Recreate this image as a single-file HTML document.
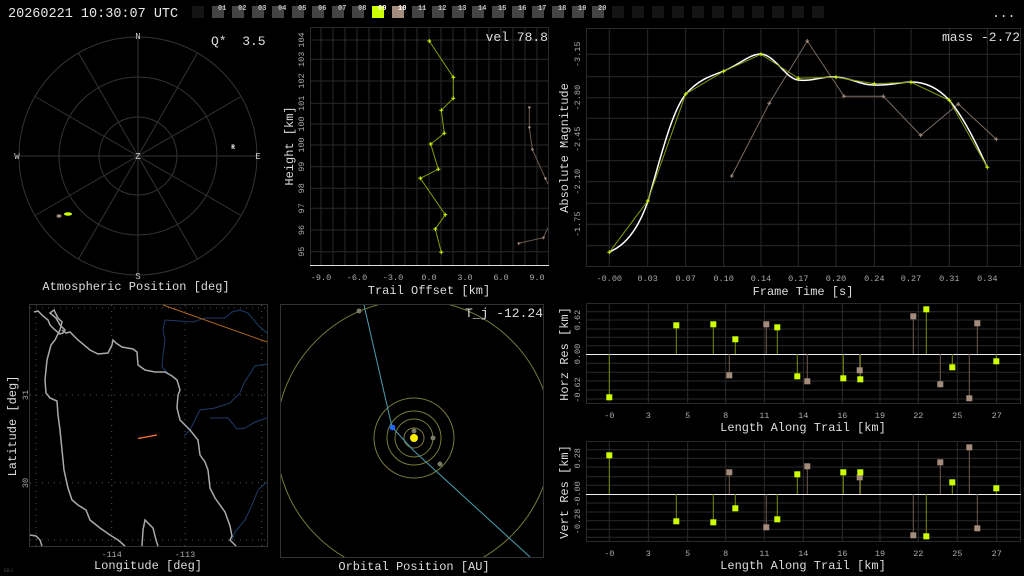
<!DOCTYPE html>
<html><head><meta charset="utf-8"><style>
html,body{margin:0;padding:0;background:#000;width:1024px;height:576px;overflow:hidden}
svg{display:block}
text{font-family:"Liberation Mono",monospace}
</style></head><body>
<svg width="1024" height="576" viewBox="0 0 1024 576" xmlns="http://www.w3.org/2000/svg">
<rect width="1024" height="576" fill="#000"/>
<!-- top bar -->
<text x="8" y="17" font-size="13.5" fill="#e8e8e8">20260221 10:30:07 UTC</text>
<g>
<rect x="192" y="6" width="12" height="12" fill="#141414"/>
<rect x="212" y="6" width="12" height="12" fill="#444"/><rect x="232" y="6" width="12" height="12" fill="#444"/>
<rect x="252" y="6" width="12" height="12" fill="#444"/><rect x="272" y="6" width="12" height="12" fill="#444"/>
<rect x="292" y="6" width="12" height="12" fill="#444"/><rect x="312" y="6" width="12" height="12" fill="#444"/>
<rect x="332" y="6" width="12" height="12" fill="#444"/><rect x="352" y="6" width="12" height="12" fill="#444"/>
<rect x="372" y="6" width="12" height="12" fill="#ccff00"/><rect x="392" y="6" width="12" height="12" fill="#a48c7c"/>
<rect x="412" y="6" width="12" height="12" fill="#444"/><rect x="432" y="6" width="12" height="12" fill="#444"/>
<rect x="452" y="6" width="12" height="12" fill="#444"/><rect x="472" y="6" width="12" height="12" fill="#444"/>
<rect x="492" y="6" width="12" height="12" fill="#444"/><rect x="512" y="6" width="12" height="12" fill="#444"/>
<rect x="532" y="6" width="12" height="12" fill="#444"/><rect x="552" y="6" width="12" height="12" fill="#444"/>
<rect x="572" y="6" width="12" height="12" fill="#444"/><rect x="592" y="6" width="12" height="12" fill="#444"/>
<rect x="612" y="6" width="12" height="12" fill="#141414"/><rect x="632" y="6" width="12" height="12" fill="#141414"/>
<rect x="652" y="6" width="12" height="12" fill="#141414"/><rect x="672" y="6" width="12" height="12" fill="#141414"/>
<rect x="692" y="6" width="12" height="12" fill="#141414"/><rect x="712" y="6" width="12" height="12" fill="#141414"/>
<rect x="732" y="6" width="12" height="12" fill="#141414"/><rect x="752" y="6" width="12" height="12" fill="#141414"/>
<rect x="772" y="6" width="12" height="12" fill="#141414"/><rect x="792" y="6" width="12" height="12" fill="#141414"/>
<rect x="812" y="6" width="12" height="12" fill="#141414"/>
</g>
<g font-size="7" fill="#bbb" font-weight="bold">
<text x="218" y="10">01</text><text x="238" y="10">02</text><text x="258" y="10">03</text><text x="278" y="10">04</text><text x="298" y="10">05</text><text x="318" y="10">06</text><text x="338" y="10">07</text><text x="358" y="10">08</text><text x="378" y="10" fill="#fff">09</text><text x="398" y="10" fill="#fff">10</text><text x="418" y="10">11</text><text x="438" y="10">12</text><text x="458" y="10">13</text><text x="478" y="10">14</text><text x="498" y="10">15</text><text x="518" y="10">16</text><text x="538" y="10">17</text><text x="558" y="10">18</text><text x="578" y="10">19</text><text x="598" y="10">20</text>
</g>
<text x="992" y="17" font-size="13" fill="#ddd">...</text>

<!-- sky plot -->
<g stroke="#333" stroke-width="1" fill="none">
<circle cx="138" cy="156" r="39"/><circle cx="138" cy="156" r="79"/><circle cx="138" cy="156" r="119"/>
<line x1="138" y1="37" x2="138" y2="275"/><line x1="19" y1="156" x2="257" y2="156"/>
<line x1="197.5" y1="52.9" x2="78.5" y2="259.1"/><line x1="241.1" y1="96.5" x2="34.9" y2="215.5"/>
<line x1="78.5" y1="52.9" x2="197.5" y2="259.1"/><line x1="34.9" y1="96.5" x2="241.1" y2="215.5"/>
</g>
<g font-size="9" fill="#ccc" text-anchor="middle">
<text x="138" y="39">N</text><text x="138" y="279">S</text><text x="17" y="159">W</text><text x="258" y="159">E</text><text x="138" y="159">Z</text>
</g>
<text x="233" y="149" font-size="6" fill="#fff" font-weight="bold" text-anchor="middle">R</text>
<ellipse cx="68" cy="214" rx="4" ry="1.8" fill="#ccff00"/>
<ellipse cx="59" cy="216" rx="2.5" ry="1.8" fill="#a48c7c"/>
<text x="211" y="45" font-size="13" fill="#ddd">Q*&#160;&#160;3.5</text>
<text x="136" y="290" font-size="12" fill="#ddd" text-anchor="middle">Atmospheric Position [deg]</text>

<!-- trail offset -->
<g stroke="#2a2a2a" stroke-width="1">
<line x1="321" y1="27" x2="321" y2="265"/><line x1="333" y1="27" x2="333" y2="265"/><line x1="345" y1="27" x2="345" y2="265"/><line x1="357" y1="27" x2="357" y2="265"/><line x1="369" y1="27" x2="369" y2="265"/><line x1="381" y1="27" x2="381" y2="265"/><line x1="393" y1="27" x2="393" y2="265"/><line x1="405" y1="27" x2="405" y2="265"/><line x1="417" y1="27" x2="417" y2="265"/><line x1="429" y1="27" x2="429" y2="265"/><line x1="441" y1="27" x2="441" y2="265"/><line x1="453" y1="27" x2="453" y2="265"/><line x1="465" y1="27" x2="465" y2="265"/><line x1="477" y1="27" x2="477" y2="265"/><line x1="489" y1="27" x2="489" y2="265"/><line x1="501" y1="27" x2="501" y2="265"/><line x1="513" y1="27" x2="513" y2="265"/><line x1="525" y1="27" x2="525" y2="265"/><line x1="537" y1="27" x2="537" y2="265"/>
<line x1="310" y1="40" x2="548" y2="40"/><line x1="310" y1="59.3" x2="548" y2="59.3"/><line x1="310" y1="81" x2="548" y2="81"/><line x1="310" y1="103.3" x2="548" y2="103.3"/><line x1="310" y1="124" x2="548" y2="124"/><line x1="310" y1="145" x2="548" y2="145"/><line x1="310" y1="166.7" x2="548" y2="166.7"/><line x1="310" y1="188.3" x2="548" y2="188.3"/><line x1="310" y1="208.3" x2="548" y2="208.3"/><line x1="310" y1="230" x2="548" y2="230"/><line x1="310" y1="251.7" x2="548" y2="251.7"/>
</g>
<rect x="310.5" y="27.5" width="238" height="238" fill="none" stroke="#2a2a2a"/>
<line x1="310" y1="265.5" x2="549" y2="265.5" stroke="#ddd"/>
<polyline fill="none" stroke="#8a9a00" stroke-width="1" points="429.3,41 453.3,77.3 453.3,98.3 441.3,110.3 444.3,133.3 430.7,144 438.3,169.3 420.3,178.3 445.3,214.7 435.3,229 441.3,252.3"/>
<g stroke="#ccff00" stroke-width="1"><path d="M427.3,41h4M429.3,39v4M451.3,77.3h4M453.3,75.3v4M451.3,98.3h4M453.3,96.3v4M439.3,110.3h4M441.3,108.3v4M442.3,133.3h4M444.3,131.3v4M428.7,144h4M430.7,142v4M436.3,169.3h4M438.3,167.3v4M418.3,178.3h4M420.3,176.3v4M443.3,214.7h4M445.3,212.7v4M433.3,229h4M435.3,227v4M439.3,252.3h4M441.3,250.3v4"/></g>
<polyline fill="none" stroke="#6a5a50" points="529.3,107.3 529.3,127.3 532.3,149.3 545.3,178.3 548,184"/>
<polyline fill="none" stroke="#6a5a50" points="548,227.7 543.3,237.7 518.7,243.3"/>
<g stroke="#a48c7c"><path d="M528,107.3h3M529.3,106v3M528,127.3h3M529.3,126v3M531,149.3h3M532.3,148v3M544,178.3h3M545.3,177v3M542,237.7h3M543.3,236.4v3M517.4,243.3h3M518.7,242v3"/></g>
<text x="548" y="41" font-size="13" fill="#ddd" text-anchor="end">vel 78.8</text>
<g font-size="8.5" fill="#aaa" text-anchor="middle">
<text x="321" y="280">-9.0</text><text x="357" y="280">-6.0</text><text x="393" y="280">-3.0</text><text x="429" y="280">0.0</text><text x="465" y="280">3.0</text><text x="501" y="280">6.0</text><text x="537" y="280">9.0</text>
</g>
<g font-size="8.5" fill="#aaa" text-anchor="middle">
<text transform="translate(304,40) rotate(-90)">104</text><text transform="translate(304,59.3) rotate(-90)">103</text><text transform="translate(304,81) rotate(-90)">102</text><text transform="translate(304,103.3) rotate(-90)">101</text><text transform="translate(304,124) rotate(-90)">100</text><text transform="translate(304,145) rotate(-90)">100</text><text transform="translate(304,166.7) rotate(-90)">99</text><text transform="translate(304,188.3) rotate(-90)">98</text><text transform="translate(304,208.3) rotate(-90)">97</text><text transform="translate(304,230) rotate(-90)">96</text><text transform="translate(304,251.7) rotate(-90)">95</text>
</g>
<text transform="translate(293,146) rotate(-90)" font-size="12" fill="#ddd" text-anchor="middle">Height [km]</text>
<text x="429" y="294" font-size="12" fill="#ddd" text-anchor="middle">Trail Offset [km]</text>

<!-- magnitude -->
<g stroke="#2a2a2a">
<line x1="609.3" y1="28" x2="609.3" y2="266"/><line x1="647.7" y1="28" x2="647.7" y2="266"/><line x1="685.7" y1="28" x2="685.7" y2="266"/><line x1="723.7" y1="28" x2="723.7" y2="266"/><line x1="761" y1="28" x2="761" y2="266"/><line x1="798.3" y1="28" x2="798.3" y2="266"/><line x1="836" y1="28" x2="836" y2="266"/><line x1="874.3" y1="28" x2="874.3" y2="266"/><line x1="911" y1="28" x2="911" y2="266"/><line x1="949.3" y1="28" x2="949.3" y2="266"/><line x1="987.3" y1="28" x2="987.3" y2="266"/>
<line x1="586" y1="54.3" x2="1020" y2="54.3"/><line x1="586" y1="76.7" x2="1020" y2="76.7"/><line x1="586" y1="97.7" x2="1020" y2="97.7"/><line x1="586" y1="118.3" x2="1020" y2="118.3"/><line x1="586" y1="139.3" x2="1020" y2="139.3"/><line x1="586" y1="160.7" x2="1020" y2="160.7"/><line x1="586" y1="181.7" x2="1020" y2="181.7"/><line x1="586" y1="203.3" x2="1020" y2="203.3"/><line x1="586" y1="224.3" x2="1020" y2="224.3"/><line x1="586" y1="245.7" x2="1020" y2="245.7"/>
</g>
<rect x="586.5" y="28.5" width="434" height="238" fill="none" stroke="#2a2a2a"/>
<polyline fill="none" stroke="#7a6a60" points="731.7,176 769.3,103.3 807.3,41 844,96.3 883.3,96.3 920.7,135.3 958.3,104 996.3,139.3"/>
<g stroke="#a48c7c"><path d="M729.7,176h4M731.7,174v4M767.3,103.3h4M769.3,101.3v4M805.3,41h4M807.3,39v4M842,96.3h4M844,94.3v4M881.3,96.3h4M883.3,94.3v4M918.7,135.3h4M920.7,133.3v4M956.3,104h4M958.3,102v4M994.3,139.3h4M996.3,137.3v4"/></g>
<path d="M609,252 C625,246 638,230 648,201 C660,160 672,110 686,94 C698,80 710,76 724,71 C740,64 750,54 761,54 C775,55 785,78 798,80 C812,82 822,76 836,77 C852,78 860,85 874,85 C890,86 900,82 911,82 C928,82 940,90 949,100 C962,115 975,140 987,167" fill="none" stroke="#fff" stroke-width="1.5"/>
<polyline fill="none" stroke="#8a9a00" points="609.3,252.3 647.7,201 685.7,94 723.7,71.3 761,54.3 798.3,78.3 836,77.3 874.3,83.7 911,82.3 949.3,100.3 987.3,167.3"/>
<g stroke="#ccff00"><path d="M607.3,252.3h4M609.3,250.3v4M645.7,201h4M647.7,199v4M683.7,94h4M685.7,92v4M721.7,71.3h4M723.7,69.3v4M759,54.3h4M761,52.3v4M796.3,78.3h4M798.3,76.3v4M834,77.3h4M836,75.3v4M872.3,83.7h4M874.3,81.7v4M909,82.3h4M911,80.3v4M947.3,100.3h4M949.3,98.3v4M985.3,167.3h4M987.3,165.3v4"/></g>
<text x="1020" y="41" font-size="13" fill="#ddd" text-anchor="end">mass -2.72</text>
<g font-size="8.5" fill="#aaa" text-anchor="middle">
<text x="609.3" y="281">-0.00</text><text x="647.7" y="281">0.03</text><text x="685.7" y="281">0.07</text><text x="723.7" y="281">0.10</text><text x="761" y="281">0.14</text><text x="798.3" y="281">0.17</text><text x="836" y="281">0.20</text><text x="874.3" y="281">0.24</text><text x="911" y="281">0.27</text><text x="949.3" y="281">0.31</text><text x="987.3" y="281">0.34</text>
<text transform="translate(580,54.3) rotate(-90)">-3.15</text><text transform="translate(580,97.7) rotate(-90)">-2.80</text><text transform="translate(580,139.3) rotate(-90)">-2.45</text><text transform="translate(580,181.7) rotate(-90)">-2.10</text><text transform="translate(580,224.3) rotate(-90)">-1.75</text>
</g>
<text transform="translate(568,148) rotate(-90)" font-size="12" fill="#ddd" text-anchor="middle">Absolute Magnitude</text>
<text x="803" y="295" font-size="12" fill="#ddd" text-anchor="middle">Frame Time [s]</text>

<!-- horizontal residuals -->
<g stroke="#2a2a2a">
<line x1="609.3" y1="303" x2="609.3" y2="403"/><line x1="648.3" y1="303" x2="648.3" y2="403"/><line x1="687.7" y1="303" x2="687.7" y2="403"/><line x1="725.7" y1="303" x2="725.7" y2="403"/><line x1="764.3" y1="303" x2="764.3" y2="403"/><line x1="803.3" y1="303" x2="803.3" y2="403"/><line x1="842.3" y1="303" x2="842.3" y2="403"/><line x1="880" y1="303" x2="880" y2="403"/><line x1="918.3" y1="303" x2="918.3" y2="403"/><line x1="957.3" y1="303" x2="957.3" y2="403"/><line x1="996.7" y1="303" x2="996.7" y2="403"/>
<line x1="586" y1="311.7" x2="1020" y2="311.7"/><line x1="586" y1="320" x2="1020" y2="320"/><line x1="586" y1="329" x2="1020" y2="329"/><line x1="586" y1="337.3" x2="1020" y2="337.3"/><line x1="586" y1="345.7" x2="1020" y2="345.7"/><line x1="586" y1="363.3" x2="1020" y2="363.3"/><line x1="586" y1="372.3" x2="1020" y2="372.3"/><line x1="586" y1="381" x2="1020" y2="381"/><line x1="586" y1="390" x2="1020" y2="390"/><line x1="586" y1="399" x2="1020" y2="399"/>
</g>
<rect x="586.5" y="303.5" width="434" height="100" fill="none" stroke="#2a2a2a"/>
<line x1="586" y1="354.5" x2="1021" y2="354.5" stroke="#eee"/>
<g stroke="#6a5a50"><path d="M729.3,354V375.3M766.3,354V324.3M807.3,354V381.3M859.7,354V370.3M913.3,354V316.3M940.3,354V384.3M969.3,354V398.3M977.3,354V323.3"/></g>
<g stroke="#7a8a00"><path d="M609.3,354V397.3M676.3,354V325.3M713.3,354V324.3M735.3,354V339.3M777.3,354V327.3M797.3,354V376.3M843.3,354V378.3M860.3,354V379.3M926.3,354V309.3M952.3,354V367.3M996.3,354V361.3"/></g>
<g fill="#a48c7c"><rect x="726.3" y="372.3" width="6" height="6"/><rect x="763.3" y="321.3" width="6" height="6"/><rect x="804.3" y="378.3" width="6" height="6"/><rect x="856.7" y="367.3" width="6" height="6"/><rect x="910.3" y="313.3" width="6" height="6"/><rect x="937.3" y="381.3" width="6" height="6"/><rect x="966.3" y="395.3" width="6" height="6"/><rect x="974.3" y="320.3" width="6" height="6"/></g>
<g fill="#ccff00"><rect x="606.3" y="394.3" width="6" height="6"/><rect x="673.3" y="322.3" width="6" height="6"/><rect x="710.3" y="321.3" width="6" height="6"/><rect x="732.3" y="336.3" width="6" height="6"/><rect x="774.3" y="324.3" width="6" height="6"/><rect x="794.3" y="373.3" width="6" height="6"/><rect x="840.3" y="375.3" width="6" height="6"/><rect x="857.3" y="376.3" width="6" height="6"/><rect x="923.3" y="306.3" width="6" height="6"/><rect x="949.3" y="364.3" width="6" height="6"/><rect x="993.3" y="358.3" width="6" height="6"/></g>
<g font-size="8.5" fill="#aaa" text-anchor="middle">
<text x="609.3" y="418">-0</text><text x="648.3" y="418">3</text><text x="687.7" y="418">5</text><text x="725.7" y="418">8</text><text x="764.3" y="418">11</text><text x="803.3" y="418">14</text><text x="842.3" y="418">16</text><text x="880" y="418">19</text><text x="918.3" y="418">22</text><text x="957.3" y="418">25</text><text x="996.7" y="418">27</text>
<text transform="translate(580,320) rotate(-90)">0.62</text><text transform="translate(580,354) rotate(-90)">0.00</text><text transform="translate(580,390) rotate(-90)">-0.62</text>
</g>
<text transform="translate(568,354) rotate(-90)" font-size="12" fill="#ddd" text-anchor="middle">Horz Res [km]</text>
<text x="803" y="431" font-size="12" fill="#ddd" text-anchor="middle">Length Along Trail [km]</text>

<!-- vertical residuals -->
<g stroke="#2a2a2a">
<line x1="609.3" y1="441" x2="609.3" y2="541"/><line x1="648.3" y1="441" x2="648.3" y2="541"/><line x1="687.7" y1="441" x2="687.7" y2="541"/><line x1="725.7" y1="441" x2="725.7" y2="541"/><line x1="764.3" y1="441" x2="764.3" y2="541"/><line x1="803.3" y1="441" x2="803.3" y2="541"/><line x1="842.3" y1="441" x2="842.3" y2="541"/><line x1="880" y1="441" x2="880" y2="541"/><line x1="918.3" y1="441" x2="918.3" y2="541"/><line x1="957.3" y1="441" x2="957.3" y2="541"/><line x1="996.7" y1="441" x2="996.7" y2="541"/>
<line x1="586" y1="449.7" x2="1020" y2="449.7"/><line x1="586" y1="458.3" x2="1020" y2="458.3"/><line x1="586" y1="467" x2="1020" y2="467"/><line x1="586" y1="476.7" x2="1020" y2="476.7"/><line x1="586" y1="485.3" x2="1020" y2="485.3"/><line x1="586" y1="503" x2="1020" y2="503"/><line x1="586" y1="512" x2="1020" y2="512"/><line x1="586" y1="520.7" x2="1020" y2="520.7"/><line x1="586" y1="529.3" x2="1020" y2="529.3"/><line x1="586" y1="537.3" x2="1020" y2="537.3"/>
</g>
<rect x="586.5" y="441.5" width="434" height="100" fill="none" stroke="#2a2a2a"/>
<line x1="586" y1="494.5" x2="1021" y2="494.5" stroke="#eee"/>
<g stroke="#6a5a50"><path d="M729.3,494V472.3M766.3,494V527.3M807.3,494V466.3M859.7,494V477.3M913.3,494V535.3M940.3,494V462.3M969.3,494V447.3M977.3,494V528.3"/></g>
<g stroke="#7a8a00"><path d="M609.3,494V455.3M676.3,494V521.3M713.3,494V522.3M735.3,494V508.3M777.3,494V519.3M797.3,494V474.3M843.3,494V472.3M860.3,494V472.3M926.3,494V536.3M952.3,494V482.3M996.3,494V488.3"/></g>
<g fill="#a48c7c"><rect x="726.3" y="469.3" width="6" height="6"/><rect x="763.3" y="524.3" width="6" height="6"/><rect x="804.3" y="463.3" width="6" height="6"/><rect x="856.7" y="474.3" width="6" height="6"/><rect x="910.3" y="532.3" width="6" height="6"/><rect x="937.3" y="459.3" width="6" height="6"/><rect x="966.3" y="444.3" width="6" height="6"/><rect x="974.3" y="525.3" width="6" height="6"/></g>
<g fill="#ccff00"><rect x="606.3" y="452.3" width="6" height="6"/><rect x="673.3" y="518.3" width="6" height="6"/><rect x="710.3" y="519.3" width="6" height="6"/><rect x="732.3" y="505.3" width="6" height="6"/><rect x="774.3" y="516.3" width="6" height="6"/><rect x="794.3" y="471.3" width="6" height="6"/><rect x="840.3" y="469.3" width="6" height="6"/><rect x="857.3" y="469.3" width="6" height="6"/><rect x="923.3" y="533.3" width="6" height="6"/><rect x="949.3" y="479.3" width="6" height="6"/><rect x="993.3" y="485.3" width="6" height="6"/></g>
<g font-size="8.5" fill="#aaa" text-anchor="middle">
<text x="609.3" y="556">-0</text><text x="648.3" y="556">3</text><text x="687.7" y="556">5</text><text x="725.7" y="556">8</text><text x="764.3" y="556">11</text><text x="803.3" y="556">14</text><text x="842.3" y="556">16</text><text x="880" y="556">19</text><text x="918.3" y="556">22</text><text x="957.3" y="556">25</text><text x="996.7" y="556">27</text>
<text transform="translate(580,458.3) rotate(-90)">0.28</text><text transform="translate(580,494) rotate(-90)">-0.00</text><text transform="translate(580,521.5) rotate(-90)">-0.28</text>
</g>
<text transform="translate(568,492) rotate(-90)" font-size="12" fill="#ddd" text-anchor="middle">Vert Res [km]</text>
<text x="803" y="569" font-size="12" fill="#ddd" text-anchor="middle">Length Along Trail [km]</text>

<!-- map -->
<rect x="29.5" y="304.5" width="238" height="242" fill="none" stroke="#333"/>
<g stroke="#555" stroke-dasharray="1,5">
<line x1="36" y1="305" x2="36" y2="546"/><line x1="111.7" y1="305" x2="111.7" y2="546"/><line x1="185" y1="305" x2="185" y2="546"/><line x1="261.7" y1="305" x2="261.7" y2="546"/>
<line x1="30" y1="308" x2="267" y2="308"/><line x1="30" y1="395" x2="267" y2="395"/><line x1="30" y1="482.7" x2="267" y2="482.7"/><line x1="30" y1="540" x2="267" y2="540"/>
</g>
<g fill="none" stroke="#1e3a6a" stroke-width="1">
<path d="M267,333 L258,325 248,313 240,310 232,312 225,318 205,318 193,322 165,320 163,330 165,340 163,355 162,367 168,373"/>
<path d="M267,364 L255,366 244,383 240,393 230,403 215,408 200,410 190,430 184,436"/>
<path d="M267,418 L255,422 245,428 237,429 228,418 210,418"/>
<path d="M267,482 L258,490 252,505 245,520 235,532 232,540"/>
</g>
<line x1="163" y1="305" x2="267" y2="342" stroke="#b0651a" stroke-width="1"/>
<g fill="none" stroke="#aaa" stroke-width="1.5">
<path d="M34,312 L38,311 43,316 48,320 50,325 55,330 60,334 63,333 65,330 60,325 56,318 50,313 54,310 58,318 62,322 60,330 55,340 51,345 47,360 45,380 46,393 50,398 57,401 58,415 60,430 62,450 64,470 68,488 72,500 78,505 86,510 90,520 100,528 110,535 118,540 125,546"/>
<path d="M62,330 L66,333 70,332 78,340 90,350 98,354 108,353 112,345 113,340 116,343 122,347 133,349 137,352 138,365 145,370 155,372 165,372 172,376 177,380 180,390 178,395 177,408 180,420 190,430 198,440 200,455 205,462 208,470 210,488 215,498 225,512 230,526 232,536 230,540 236,546"/>
<path d="M142,546 L143,530 145,520 148,523 153,528 156,540 158,546"/>
<path d="M30,535 L36,536 40,540 42,546"/>
</g>
<line x1="138" y1="438.5" x2="157" y2="435" stroke="#ff7733" stroke-width="1.3"/>
<g font-size="8.5" fill="#aaa" text-anchor="middle">
<text x="111.7" y="557">-114</text><text x="185" y="557">-113</text>
<text transform="translate(28,395) rotate(-90)">31</text><text transform="translate(28,483) rotate(-90)">30</text>
</g>
<text transform="translate(16,426) rotate(-90)" font-size="12" fill="#ddd" text-anchor="middle">Latitude [deg]</text>
<text x="148" y="569" font-size="12" fill="#ddd" text-anchor="middle">Longitude [deg]</text>
<text x="4" y="572" font-size="5" fill="#444">ERJ</text>

<!-- orbit -->
<rect x="280.5" y="304.5" width="263" height="253" fill="none" stroke="#333"/>
<defs><clipPath id="oc"><rect x="281" y="305" width="262" height="252"/></clipPath></defs>
<g clip-path="url(#oc)" fill="none" stroke="#7a7a3a" stroke-width="1">
<circle cx="414" cy="438" r="10"/><circle cx="414" cy="438" r="19"/><circle cx="414" cy="438" r="27"/><circle cx="414" cy="438" r="40"/><circle cx="414" cy="438" r="138"/>
<polyline stroke="#4aa0b0" points="364,305 392,427 414,451 530,557"/>
</g>
<circle cx="414" cy="438" r="4" fill="#ffee00"/>
<g fill="#7a7a68"><circle cx="414" cy="431" r="2.5"/><circle cx="433" cy="438" r="2.5"/><circle cx="440" cy="464" r="2.5"/><circle cx="359" cy="311" r="2.5"/></g>
<circle cx="392.5" cy="427.5" r="2.8" fill="#1a6aff"/>
<text x="543" y="317" font-size="13" fill="#ddd" text-anchor="end">T_j -12.24</text>
<text x="414" y="570" font-size="12" fill="#ddd" text-anchor="middle">Orbital Position [AU]</text>
</svg>
</body></html>
